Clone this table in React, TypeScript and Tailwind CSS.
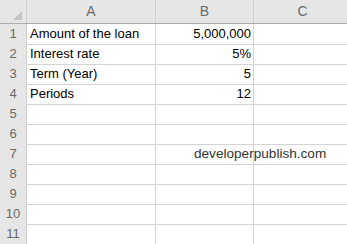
import React from 'react';

const cols = ['A', 'B', 'C'];

const rows: { a?: string; b?: string }[] = [
  { a: 'Amount of the loan', b: '5,000,000' },
  { a: 'Interest rate', b: '5%' },
  { a: 'Term (Year)', b: '5' },
  { a: 'Periods', b: '12' },
  {}, {}, {}, {}, {}, {}, {},
];

const gridCols = 'grid grid-cols-[27px_129px_98px_98px]';

export default function App() {
  return (
    <div className="relative w-[347px] h-[244px] overflow-hidden bg-white font-['Liberation_Sans',Arial,sans-serif]">
      <div className="w-[352px]">
        {/* column headers */}
        <div className={`${gridCols} h-6 bg-[#e6e6e6] border-b border-[#ababab]`}>
          <div className="relative border-r border-[#d0d0d0]">
            <div className="absolute right-[4px] bottom-[3px] w-0 h-0 border-l-[9px] border-l-transparent border-b-[9px] border-b-[#c4c4c4]" />
          </div>
          {cols.map((c) => (
            <div
              key={c}
              className="flex items-center justify-center border-r border-[#d0d0d0] text-[14px] text-[#6a6a6a]"
            >
              {c}
            </div>
          ))}
        </div>

        {rows.map((r, i) => (
          <div key={i} className={`${gridCols} h-5`}>
            <div className="flex items-center justify-center bg-[#e6e6e6] border-r border-b border-[#d0d0d0] text-[13px] text-[#6a6a6a]">
              {i + 1}
            </div>
            <div className="flex items-center pl-[3px] border-r border-b border-[#d4d4d4] text-[13px] text-black whitespace-nowrap">
              {r.a}
            </div>
            <div className="flex items-center justify-end pr-[2px] border-r border-b border-[#d4d4d4] text-[13px] text-black">
              {r.b}
            </div>
            <div className="border-r border-b border-[#d4d4d4]" />
          </div>
        ))}
      </div>

      {/* watermark text floating over the sheet */}
      <div className="absolute left-[194px] top-[144px] h-5 flex items-center text-[13.6px] text-[#333] font-['Liberation_Sans',Arial,sans-serif] whitespace-nowrap">
        developerpublish.com
      </div>
    </div>
  );
}
